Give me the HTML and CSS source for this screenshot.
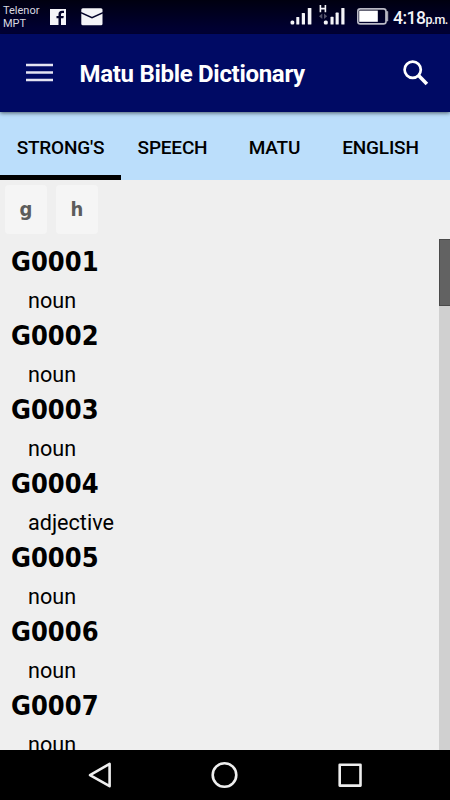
FILE: index.html
```html
<!DOCTYPE html>
<html lang="en">
<head>
    <meta charset="UTF-8">
    <meta name="viewport" content="width=device-width, initial-scale=1.0">
    <title>Matu Bible Dictionary</title>
    <link rel="stylesheet" href="styles.css">
</head>
<body>
    <div class="screen">
        <div class="status-bar">
            <div class="carrier">Telenor<br>MPT</div>
            <svg class="facebook" width="16" height="16" viewBox="0 0 16 16">
                <rect width="16" height="16" fill="#f4f4f8"/>
                <path d="M14 4.1H12.7C11.5 4.1 11 4.6 11 5.6V7H13.8L13.4 9.2H11V16H8.5V9.2H6.5V7H8.5V5.2C8.5 3 9.7 1.8 12 1.8H14Z" fill="#03032a"/>
            </svg>
            <svg class="mail" width="22" height="18" viewBox="0 0 22 18">
                <rect x="0.3" y="0.3" width="21.2" height="17" rx="1.5" fill="#f4f4f8"/>
                <path d="M0 4.8L11 9.8L22 4.8" fill="none" stroke="#03032a" stroke-width="1.5"/>
            </svg>
            <svg class="signals" width="56" height="26" viewBox="0 0 56 26" fill="#f4f4f8">
                <rect x="0.5" y="16.5" width="3.8" height="4" rx="1.5"/>
                <rect x="6.3" y="13" width="3" height="7.5" rx="0.6"/>
                <rect x="11.8" y="9" width="3.2" height="11.5" rx="0.6"/>
                <rect x="17.8" y="4" width="3.6" height="16.5" rx="0.6"/>
                <path d="M30.4 1V8.3M35.4 1V8.3M30.4 4.6H35.4" stroke="#f4f4f8" stroke-width="1.6"/>
                <path d="M32.3 9.5V15L29 12.2ZM34 9.5V15L37.2 12.2Z" fill="#55556c"/>
                <rect x="33.8" y="16.5" width="4" height="4" rx="1.5"/>
                <rect x="40.5" y="12.8" width="3.1" height="7.7" rx="0.6"/>
                <rect x="45.6" y="8.6" width="3.1" height="11.9" rx="0.6"/>
                <rect x="51.3" y="4" width="3.2" height="16.5" rx="0.6"/>
            </svg>
            <svg class="battery" width="32" height="17" viewBox="0 0 32 17">
                <rect x="0.8" y="0.9" width="28.2" height="15" rx="2.5" fill="none" stroke="#b9b9c5" stroke-width="1.6"/>
                <path d="M29 3.5H30.8V13H29Z" fill="#b9b9c5" stroke="#b9b9c5" stroke-width="0.6"/>
                <rect x="2.2" y="2.6" width="18.6" height="11.2" fill="#fff"/>
            </svg>
            <div class="clock">4:18<span>p.m.</span></div>
        </div>

        <div class="toolbar">
            <svg class="menu" width="27" height="20" viewBox="0 0 27 20">
                <path d="M0 2H27M0 9.5H27M0 17H27" stroke="#e4e4f2" stroke-width="2.7"/>
            </svg>
            <h1>Matu Bible Dictionary</h1>
            <svg class="search" width="26" height="26" viewBox="0 0 26 26">
                <circle cx="9.7" cy="9.7" r="8.1" fill="none" stroke="#fff" stroke-width="2.7"/>
                <path d="M15.6 15.6L23.9 23.9" fill="none" stroke="#fff" stroke-width="3.6"/>
            </svg>
        </div>

        <div class="tabs">
            <div class="tab strongs active"><span>STRONG'S</span></div>
            <div class="tab speech"><span>SPEECH</span></div>
            <div class="tab matu"><span>MATU</span></div>
            <div class="tab english"><span>ENGLISH</span></div>
        </div>

        <div class="letters">
            <button>g</button>
            <button>h</button>
        </div>

        <div class="content">
            <div class="list">
                <div class="entry"><h2>G0001</h2><p>noun</p></div>
                <div class="entry"><h2>G0002</h2><p>noun</p></div>
                <div class="entry"><h2>G0003</h2><p>noun</p></div>
                <div class="entry"><h2>G0004</h2><p>adjective</p></div>
                <div class="entry"><h2>G0005</h2><p>noun</p></div>
                <div class="entry"><h2>G0006</h2><p>noun</p></div>
                <div class="entry"><h2>G0007</h2><p>noun</p></div>
            </div>
            <div class="scrollbar"><div class="thumb"></div></div>
        </div>

        <div class="nav-bar">
            <svg width="450" height="50" viewBox="0 0 450 50" fill="none" stroke="#eee" stroke-width="2.6" stroke-linejoin="round">
                <path d="M109.6 13.8V36.2L90 25.2Z"/>
                <circle cx="224.5" cy="25" r="11.8"/>
                <rect x="339.7" y="14.8" width="20.8" height="20.8"/>
            </svg>
        </div>
    </div>
</body>
</html>
```
FILE: styles.css
```css
* {
    box-sizing: border-box;
}
body {
    margin: 0;
    font-family: Roboto, sans-serif;
    color: #000;
    background: #efefef;
}
h1, h2, p {
    margin: 0;
}
svg {
    display: block;
    flex: none;
}
.screen {
    width: 450px;
    height: 800px;
    display: flex;
    flex-direction: column;
    overflow: hidden;
    background: #efefef;
}
.status-bar {
    height: 34px;
    flex: none;
    display: flex;
    align-items: flex-start;
    background: linear-gradient(#000010, #000038);
    color: #f4f4f8;
}
.carrier {
    width: 50px;
    padding: 4px 0 0 3px;
    font-size: 11px;
    line-height: 13px;
    color: #d8d8e0;
}
.facebook {
    margin-top: 9px;
}
.mail {
    margin: 8px 0 0 15px;
}
.signals {
    margin: 4px 0 0 187px;
}
.battery {
    margin: 8px 0 0 11px;
}
.clock {
    margin-left: 4px;
    padding-top: 8px;
    font-size: 17.5px;
    font-weight: 500;
    line-height: 20px;
    letter-spacing: -0.5px;
    white-space: nowrap;
}
.clock span {
    font-size: 12.5px;
    letter-spacing: -0.7px;
}
.toolbar {
    position: relative;
    height: 78px;
    flex: none;
    display: flex;
    align-items: flex-start;
    padding: 0 21px 0 26px;
    background: #000a64;
    box-shadow: 0 1px 4px rgba(0,0,0,0.6);
}
.menu {
    margin-top: 29px;
}
.toolbar h1 {
    flex: 1;
    margin-left: 26.5px;
    padding-top: 26px;
    font-size: 24px;
    line-height: 28px;
    font-weight: 700;
    letter-spacing: -0.3px;
    color: #fff;
}
.search {
    margin-top: 26px;
}
.tabs {
    height: 68px;
    flex: none;
    display: flex;
    background: #bbdefb;
}
.tab {
    display: flex;
    align-items: center;
    justify-content: center;
    padding-top: 2px;
    font-size: 19px;
    font-weight: 500;
    letter-spacing: -0.2px;
}
.strongs {
    width: 121px;
}
.speech {
    width: 103px;
}
.matu {
    width: 101px;
}
.english {
    width: 111px;
}
.active {
    padding-top: 7px;
    border-bottom: 5px solid #000;
}
.letters {
    height: 59px;
    flex: none;
    display: flex;
    gap: 9px;
    padding: 5px;
}
.letters button {
    width: 42px;
    height: 49px;
    padding: 0 0 1px;
    border: none;
    border-radius: 4px;
    background: #f5f5f5;
    color: #5c5c5c;
    font-family: "DejaVu Sans Condensed", "DejaVu Sans", sans-serif;
    font-stretch: condensed;
    font-size: 20px;
    font-weight: bold;
}
.content {
    flex: 1;
    min-height: 0;
    display: flex;
    overflow: hidden;
}
.list {
    flex: 1;
    overflow: hidden;
}
.entry {
    height: 74px;
    padding-left: 11px;
}
.entry h2 {
    padding-top: 3px;
    font-family: "DejaVu Sans Condensed", "DejaVu Sans", sans-serif;
    font-stretch: condensed;
    font-size: 27px;
    line-height: 40px;
    font-weight: bold;
}
.entry p {
    padding-left: 17px;
    font-size: 21.6px;
    line-height: 37px;
}
.scrollbar {
    width: 11px;
    background: #d0d0d0;
}
.thumb {
    height: 67px;
    background: #626262;
    border: solid #4a4a4a;
    border-width: 1px 0 1px 1px;
}
.nav-bar {
    height: 50px;
    flex: none;
    background: #000;
}
```
